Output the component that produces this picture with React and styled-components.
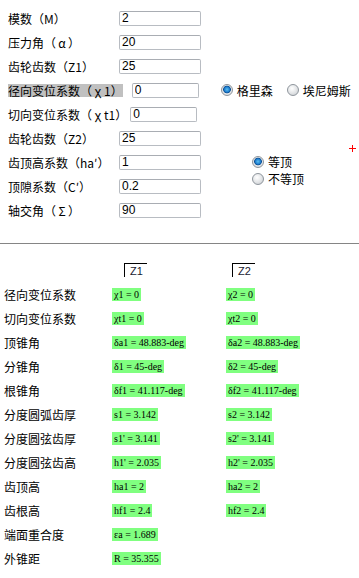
import React from "react";
import styled, { createGlobalStyle } from "styled-components";

const GlobalStyle = createGlobalStyle`
  html, body {
    margin: 0;
    padding: 0;
    background: #fff;
  }
  body {
    font-family: "Noto Sans CJK SC", "Liberation Sans", sans-serif;
    color: #000;
  }
`;

const inputs = [
  { name: "模数", sym: "M", value: "2" },
  { name: "压力角", sym: "α", wide: true, value: "20" },
  { name: "齿轮齿数", sym: "Z1", value: "25" },
  { name: "径向变位系数", sym: "χ", sub: "1", wide: true, value: "0", mark: true },
  { name: "切向变位系数", sym: "χ", sub: "t1", wide: true, value: "0", tight: true },
  { name: "齿轮齿数", sym: "Z2", value: "25" },
  { name: "齿顶高系数", sym: "ha′", value: "1" },
  { name: "顶隙系数", sym: "C′", value: "0.2" },
  { name: "轴交角", sym: "Σ", wide: true, value: "90" },
];

const results = [
  { label: "径向变位系数", a: "χ1 = 0", b: "χ2 = 0" },
  { label: "切向变位系数", a: "χt1 = 0", b: "χt2 = 0" },
  { label: "顶锥角", a: "δa1 = 48.883-deg", b: "δa2 = 48.883-deg" },
  { label: "分锥角", a: "δ1 = 45-deg", b: "δ2 = 45-deg" },
  { label: "根锥角", a: "δf1 = 41.117-deg", b: "δf2 = 41.117-deg" },
  { label: "分度圆弧齿厚", a: "s1 = 3.142", b: "s2 = 3.142" },
  { label: "分度圆弦齿厚", a: "s1' = 3.141", b: "s2' = 3.141" },
  { label: "分度圆弦齿高", a: "h1' = 2.035", b: "h2' = 2.035" },
  { label: "齿顶高", a: "ha1 = 2", b: "ha2 = 2" },
  { label: "齿根高", a: "hf1 = 2.4", b: "hf2 = 2.4" },
  { label: "端面重合度", a: "εa = 1.689" },
  { label: "外锥距", a: "R = 35.355" },
];

const App = () => {
  return (
    <Page>
      <GlobalStyle />
      <TopPanel>
        <Form>
          {inputs.map((item, i) => (
            <FieldRow key={item.name + item.sym}>
              <FieldLabel $mark={item.mark} $tight={item.tight}>
                {item.name}（{item.wide ? <Sym>{item.sym}</Sym> : item.sym}
                {item.sub}）
              </FieldLabel>
              <TextBox
                defaultValue={item.value}
                $short={item.mark || item.tight}
                $gap={item.mark ? 9 : item.tight ? 3 : 0}
              />
              {i === 3 && (
                <InlineRadios>
                  <Radio checked label="格里森" />
                  <Radio label="埃尼姆斯" />
                </InlineRadios>
              )}
              {i === 6 && (
                <StackRadios>
                  <Radio checked label="等顶" />
                  <Radio label="不等顶" />
                </StackRadios>
              )}
            </FieldRow>
          ))}
        </Form>
        <Cross />
      </TopPanel>
      <Divider />
      <ResultGrid>
        <span />
        <HeaderCell $shift={12}>
          <Overline>Z1</Overline>
        </HeaderCell>
        <HeaderCell $shift={6}>
          <Overline>Z2</Overline>
        </HeaderCell>
        {results.map((row) => (
          <React.Fragment key={row.label}>
            <ResultLabel>{row.label}</ResultLabel>
            <Cell>{row.a && <Value>{row.a}</Value>}</Cell>
            <Cell>{row.b && <Value>{row.b}</Value>}</Cell>
          </React.Fragment>
        ))}
      </ResultGrid>
    </Page>
  );
};

const Radio = ({ checked, label }) => (
  <RadioItem>
    <RadioDot $checked={checked} />
    {label}
  </RadioItem>
);

const Page = styled.div`
  width: 359px;
  height: 578px;
  overflow: hidden;
`;

const TopPanel = styled.div`
  position: relative;
  padding: 6px 0 0 8px;
`;

const Form = styled.div`
  display: flex;
  flex-direction: column;
`;

const FieldRow = styled.div`
  display: flex;
  align-items: center;
  height: 24px;
  position: relative;
`;

const FieldLabel = styled.span`
  font-size: 12px;
  line-height: 13px;
  white-space: nowrap;
  min-width: ${(p) => (p.$mark || p.$tight ? "auto" : "111px")};
  background: ${(p) => (p.$mark ? "#c0c0c0" : "transparent")};
`;

const Sym = styled.span`
  display: inline-block;
  min-width: 12px;
  text-align: center;
`;

const TextBox = styled.input`
  box-sizing: border-box;
  width: ${(p) => (p.$short ? "67px" : "82px")};
  height: 15px;
  margin: 0 0 0 ${(p) => p.$gap}px;
  padding: 0 2px;
  border: 1px solid #b8bcc2;
  border-top-color: #a9adb3;
  border-radius: 2px;
  font-family: "Liberation Sans", Arial, sans-serif;
  font-size: 12px;
  color: #000;
  outline: none;
`;

const InlineRadios = styled.div`
  display: flex;
  gap: 14px;
  margin-left: 22px;
`;

const StackRadios = styled.div`
  position: absolute;
  left: 244px;
  top: 5px;
  display: flex;
  flex-direction: column;
  gap: 4px;
`;

const RadioItem = styled.label`
  display: flex;
  align-items: center;
  gap: 4px;
  font-size: 12px;
  line-height: 13px;
  white-space: nowrap;
`;

const RadioDot = styled.span`
  box-sizing: border-box;
  width: 12px;
  height: 12px;
  border-radius: 50%;
  border: 1px solid #8e959c;
  background: ${(p) =>
    p.$checked
      ? "radial-gradient(circle at 50% 45%, #5cc0f0 0, #1f7fd0 2.5px, #0b4f93 3.5px, #e8eaec 4.2px, #c9cdd2 100%)"
      : "radial-gradient(circle at 40% 35%, #ffffff 0, #e4e6e8 50%, #c4c8cc 100%)"};
`;

const Cross = styled.span`
  position: absolute;
  left: 349px;
  top: 145px;
  width: 7px;
  height: 7px;
  &::before,
  &::after {
    content: "";
    position: absolute;
    background: #ff0000;
  }
  &::before {
    left: 3px;
    top: 0;
    width: 1px;
    height: 7px;
  }
  &::after {
    left: 0;
    top: 3px;
    width: 7px;
    height: 1px;
  }
`;

const Divider = styled.hr`
  margin: 21px 0 0;
  border: none;
  height: 1px;
  background: #858585;
`;

const ResultGrid = styled.div`
  display: grid;
  grid-template-columns: 108px 114px 1fr;
  grid-auto-rows: 24px;
  padding: 14px 0 0 4px;
`;

const HeaderCell = styled.div`
  display: flex;
  align-items: center;
  padding-left: ${(p) => p.$shift}px;
`;

const Overline = styled.span`
  box-sizing: border-box;
  height: 14px;
  padding: 1px 0 0 5px;
  width: 23px;
  border-left: 1px solid #000;
  border-top: 1px solid #000;
  font-family: "Liberation Sans", Arial, sans-serif;
  font-size: 11px;
  line-height: 12px;
  color: #1a1a30;
`;

const ResultLabel = styled.div`
  display: flex;
  align-items: center;
  font-size: 12px;
  white-space: nowrap;
`;

const Cell = styled.div`
  display: flex;
  align-items: center;
`;

const Value = styled.span`
  background: #80ff80;
  padding: 0 2px;
  height: 13px;
  font-family: "Liberation Serif", "Times New Roman", serif;
  font-size: 10px;
  line-height: 13px;
  white-space: nowrap;
  color: #000;
`;

export default App;
